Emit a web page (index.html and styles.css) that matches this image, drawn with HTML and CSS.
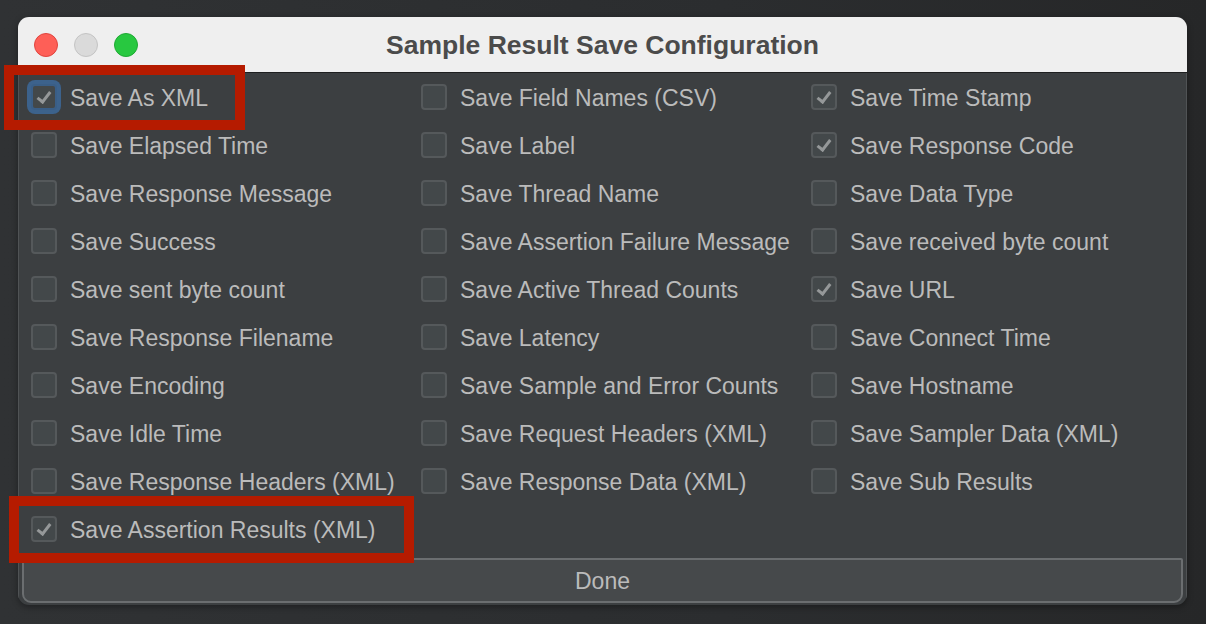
FILE: index.html
```html
<!DOCTYPE html>
<html>
<head>
<meta charset="utf-8">
<title>Sample Result Save Configuration</title>
<link rel="stylesheet" href="styles.css">
</head>
<body>
<div class="window">
  <div class="titlebar">
    <div class="lights">
      <span class="light red"></span>
      <span class="light gray"></span>
      <span class="light green"></span>
    </div>
    <div class="title">Sample Result Save Configuration</div>
  </div>
  <div class="content">
    <div class="grid">
      <label class="opt"><span class="box checked focused"></span><span class="lbl">Save As XML</span></label>
      <label class="opt"><span class="box"></span><span class="lbl">Save Field Names (CSV)</span></label>
      <label class="opt"><span class="box checked"></span><span class="lbl">Save Time Stamp</span></label>

      <label class="opt"><span class="box"></span><span class="lbl">Save Elapsed Time</span></label>
      <label class="opt"><span class="box"></span><span class="lbl">Save Label</span></label>
      <label class="opt"><span class="box checked"></span><span class="lbl">Save Response Code</span></label>

      <label class="opt"><span class="box"></span><span class="lbl">Save Response Message</span></label>
      <label class="opt"><span class="box"></span><span class="lbl">Save Thread Name</span></label>
      <label class="opt"><span class="box"></span><span class="lbl">Save Data Type</span></label>

      <label class="opt"><span class="box"></span><span class="lbl">Save Success</span></label>
      <label class="opt"><span class="box"></span><span class="lbl">Save Assertion Failure Message</span></label>
      <label class="opt"><span class="box"></span><span class="lbl">Save received byte count</span></label>

      <label class="opt"><span class="box"></span><span class="lbl">Save sent byte count</span></label>
      <label class="opt"><span class="box"></span><span class="lbl">Save Active Thread Counts</span></label>
      <label class="opt"><span class="box checked"></span><span class="lbl">Save URL</span></label>

      <label class="opt"><span class="box"></span><span class="lbl">Save Response Filename</span></label>
      <label class="opt"><span class="box"></span><span class="lbl">Save Latency</span></label>
      <label class="opt"><span class="box"></span><span class="lbl">Save Connect Time</span></label>

      <label class="opt"><span class="box"></span><span class="lbl">Save Encoding</span></label>
      <label class="opt"><span class="box"></span><span class="lbl">Save Sample and Error Counts</span></label>
      <label class="opt"><span class="box"></span><span class="lbl">Save Hostname</span></label>

      <label class="opt"><span class="box"></span><span class="lbl">Save Idle Time</span></label>
      <label class="opt"><span class="box"></span><span class="lbl">Save Request Headers (XML)</span></label>
      <label class="opt"><span class="box"></span><span class="lbl">Save Sampler Data (XML)</span></label>

      <label class="opt"><span class="box"></span><span class="lbl">Save Response Headers (XML)</span></label>
      <label class="opt"><span class="box"></span><span class="lbl">Save Response Data (XML)</span></label>
      <label class="opt"><span class="box"></span><span class="lbl">Save Sub Results</span></label>

      <label class="opt"><span class="box checked"></span><span class="lbl">Save Assertion Results (XML)</span></label>
    </div>
    <button class="done">Done</button>
  </div>
</div>
<div class="mark mark-one"></div>
<div class="mark mark-two"></div>
</body>
</html>
```

FILE: styles.css
```css
html, body {
  margin: 0;
  padding: 0;
}
body {
  width: 1206px;
  height: 624px;
  overflow: hidden;
  position: relative;
  background: linear-gradient(90deg, #303234 0%, #2b2d2f 60%, #262728 100%);
  font-family: "Liberation Sans", Arial, sans-serif;
}
.window {
  position: absolute;
  left: 18px;
  top: 17px;
  width: 1169px;
  height: 588px;
  border-radius: 11px;
  background: #3c3f41;
  overflow: hidden;
  box-shadow: 0 2px 6px rgba(0,0,0,0.35);
  display: flex;
  flex-direction: column;
}
.titlebar {
  height: 55px;
  flex: none;
  background: #efefef;
  border-bottom: 1px solid #1e1f20;
  position: relative;
  display: flex;
  align-items: center;
  justify-content: center;
}
.lights {
  position: absolute;
  left: 16px;
  top: 16px;
  display: flex;
  gap: 16px;
}
.light {
  width: 24px;
  height: 24px;
  border-radius: 50%;
  box-sizing: border-box;
}
.light.red { background: #fe5f57; border: 1px solid #e0443e; }
.light.gray { background: #dadada; border: 1px solid #c4c4c4; }
.light.green { background: #28c840; border: 1px solid #1fa934; }
.title {
  font-size: 26.5px;
  font-weight: bold;
  color: #4b4b4b;
  margin-top: 2px;
}
.content {
  flex: 1;
  display: flex;
  flex-direction: column;
  border-left: 1px solid #505355;
  border-right: 1px solid #505355;
}
.grid {
  display: grid;
  grid-template-columns: 390px 390px 390px;
  grid-auto-rows: 48px;
  padding-left: 12px;
}
.opt {
  display: flex;
  align-items: center;
  gap: 13px;
  color: #bbbbbb;
  font-size: 23px;
  white-space: nowrap;
}
.lbl {
  padding-top: 2px;
}
.box {
  width: 26px;
  height: 26px;
  box-sizing: border-box;
  border: 2px solid #55595b;
  border-radius: 4px;
  background: #43484a;
  flex: none;
  position: relative;
}
.box.checked::after {
  content: "";
  position: absolute;
  left: 7px;
  top: 3px;
  width: 5px;
  height: 11px;
  border-right: 3px solid #959899;
  border-bottom: 3px solid #959899;
  transform: rotate(38deg);
  transform-origin: center;
}
.box.focused {
  border-color: #3a5e86;
  box-shadow: 0 0 0 4px #3c628c;
}
.done {
  margin: 5px 3px 1px 3px;
  height: 45px;
  flex: none;
  background: #46494b;
  border: 2px solid #6b6e70;
  border-radius: 2px 2px 9px 9px;
  color: #bbbbbb;
  font-family: "Liberation Sans", Arial, sans-serif;
  font-size: 23px;
  padding: 2px 0 0 0;
}
.mark {
  position: absolute;
  border: 10px solid #b51b00;
  box-sizing: border-box;
}
.mark-one {
  left: 4px;
  top: 65px;
  width: 241px;
  height: 65px;
}
.mark-two {
  left: 9px;
  top: 496px;
  width: 405px;
  height: 67px;
}
```
